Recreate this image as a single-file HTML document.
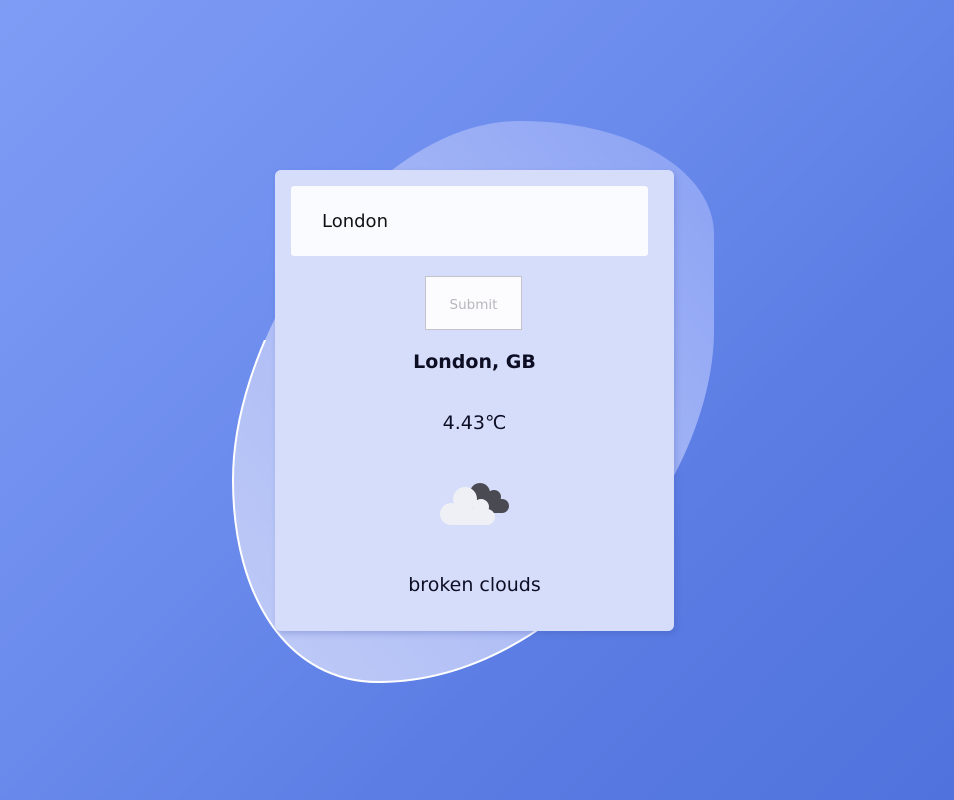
<!DOCTYPE html>
<html><head><meta charset="utf-8"><style>
html,body{margin:0;padding:0;width:954px;height:800px;overflow:hidden}
body{background:linear-gradient(135deg,#7f9cf5 0%,#6c8ced 40%,#5a7ce3 70%,#4f72dc 100%);font-family:"DejaVu Sans","Liberation Sans",sans-serif;position:relative}
svg.blob{position:absolute;left:0;top:0}
.card{position:absolute;left:275px;top:170px;width:399px;height:461px;background:#d5ddfa;border-radius:6px;box-shadow:2px 3px 6px rgba(60,80,170,0.25)}
.inp{position:absolute;left:16px;top:16px;width:357px;height:70px;background:#fafbff;border-radius:3px;font-size:18px;color:#111;line-height:72px;padding-left:31px;box-sizing:border-box}
.btn{position:absolute;left:150px;top:106px;width:97px;height:54px;background:#fcfcfe;border:1px solid #c4c4c8;box-sizing:border-box;font-size:13.5px;color:#b8b8bc;text-align:center;line-height:56px}
.t{position:absolute;left:0;width:399px;text-align:center;color:#0d0d24}
</style></head><body>
<svg class="blob" width="954" height="800">
<defs><linearGradient id="g" x1="0" y1="1" x2="1" y2="0"><stop offset="0" stop-color="#c0cbf6"/><stop offset="0.5" stop-color="#a9b9f6"/><stop offset="1" stop-color="#8aa2f4"/></linearGradient>
<clipPath id="c"><polygon points="0,340 300,340 620,640 620,800 0,800"/></clipPath></defs>
<path d="M520 121 C630 121 714 170 714 235 L714 330 C714 480 560 682 378 682 C290 682 233 600 233 480 C233 330 370 121 520 121 Z" fill="url(#g)"/>
<path clip-path="url(#c)" d="M520 121 C630 121 714 170 714 235 L714 330 C714 480 560 682 378 682 C290 682 233 600 233 480 C233 330 370 121 520 121 Z" fill="none" stroke="#ffffff" stroke-width="2"/>
</svg>
<div class="card">
<div class="inp">London</div>
<div class="btn">Submit</div>
<div class="t" style="top:181px;font-size:19px;font-weight:bold">London, GB</div>
<div class="t" style="top:242px;font-size:19px">4.43℃</div>
<svg style="position:absolute;left:160px;top:305px" width="80" height="60">
<g fill="#4a4a52"><circle cx="45" cy="18" r="10"/><circle cx="59" cy="22" r="7"/><circle cx="67" cy="31" r="7"/><rect x="45" y="24" width="22" height="14"/></g>
<g fill="#eef0f5"><circle cx="30" cy="24" r="12"/><circle cx="46" cy="32" r="8"/><circle cx="16" cy="39" r="11"/><rect x="16" y="34" width="44" height="16" rx="8"/><rect x="16" y="36" width="38" height="14"/></g>
</svg>
<div class="t" style="top:404px;font-size:19px">broken clouds</div>
</div>
</body></html>
